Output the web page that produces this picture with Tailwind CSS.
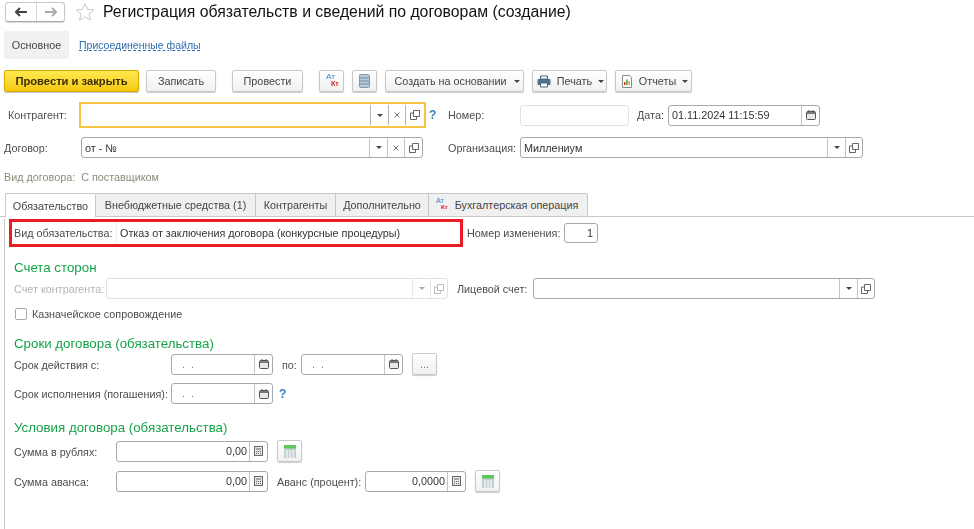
<!DOCTYPE html>
<html lang="ru">
<head>
  <meta charset="UTF-8" />
  <title>Регистрация обязательств</title>
  <script src="https://cdn.jsdelivr.net/npm/@tailwindcss/browser@4"></script>
</head>
<body class="bg-white w-[974px] h-[529px] overflow-hidden whitespace-nowrap font-['Liberation_Sans',Arial,sans-serif] text-[10.8px] text-[#4d4d4d] blur-[0.3px]">

  <!-- header -->
  <div class="flex items-center h-[22px] mt-px pl-[5px]">
    <div class="flex w-[60px] h-[20px] border border-[#c8c8c8] border-b-[#a8a8a8] rounded-[3px] shadow-[0_1px_1px_rgba(0,0,0,0.15)]">
      <div class="w-[31px] flex items-center justify-center border-r border-[#d8d8d8]">
        <svg width="12" height="10" viewBox="0 0 12 10"><path d="M5 1 1 5l4 4M1 5h11" fill="none" stroke="#444" stroke-width="2"/></svg>
      </div>
      <div class="flex-1 flex items-center justify-center">
        <svg width="12" height="10" viewBox="0 0 12 10"><path d="M7 1l4 4-4 4M11 5H0" fill="none" stroke="#aaa" stroke-width="2"/></svg>
      </div>
    </div>
    <svg class="ml-[10px]" width="20" height="20" viewBox="0 0 20 20"><path d="M10 1.500l2.500 5.800 6.300.6-4.800 4.100 1.500 6.200-5.500-3.300-5.500 3.300 1.500-6.200L1.200 7.900l6.300-.6z" fill="#fff" stroke="#c9c9c9"/></svg>
    <h1 class="ml-[8px] text-[15.8px] leading-none text-[#111]">Регистрация обязательств и сведений по договорам (создание)</h1>
  </div>

  <!-- sections -->
  <div class="flex items-center h-[28px] mt-[8px] ml-[4px]">
    <div class="w-[65px] h-full pt-px bg-[#f1f1f1] rounded-[2px] flex items-center justify-center text-[#444]">Основное</div>
    <a class="ml-[10px] pt-px text-[10.5px] text-[#2f6fb5] underline decoration-dashed">Присоединенные файлы</a>
  </div>

  <!-- toolbar -->
  <div class="flex h-[22px] mt-[11px] ml-[4px] text-[#444]">
    <button class="w-[135px] pt-px rounded-[2px] border border-[#d6ab00] bg-gradient-to-b from-[#ffe94d] to-[#f7c800] text-[11.2px] font-bold text-[#3a3000] shadow-[0_1px_1px_rgba(0,0,0,0.25)]">Провести и закрыть</button>
    <button class="w-[70px] pt-px ml-[7px] rounded-[2px] border border-[#c8c8c8] bg-gradient-to-b from-white to-[#f0f0f0] shadow-[0_1px_1px_rgba(0,0,0,0.2)]">Записать</button>
    <button class="w-[71px] pt-px ml-[16px] rounded-[2px] border border-[#c8c8c8] bg-gradient-to-b from-white to-[#f0f0f0] shadow-[0_1px_1px_rgba(0,0,0,0.2)]">Провести</button>
    <button class="w-[25px] ml-[16px] rounded-[2px] border border-[#c8c8c8] bg-gradient-to-b from-white to-[#f0f0f0] shadow-[0_1px_1px_rgba(0,0,0,0.2)] relative">
      <span class="absolute left-[6px] top-[2px] text-[8px] leading-none text-[#3a7fc0]">Ат</span>
      <span class="absolute left-[11px] top-[9px] text-[7px] leading-none font-bold text-[#d9201c]">Кт</span>
    </button>
    <button class="w-[25px] ml-[8px] rounded-[2px] border border-[#c8c8c8] bg-gradient-to-b from-white to-[#f0f0f0] shadow-[0_1px_1px_rgba(0,0,0,0.2)] flex items-center justify-center">
      <svg width="11" height="14" viewBox="0 0 11 14"><rect x=".5" y=".5" width="10" height="13" rx="1" fill="#b9cbd8" stroke="#7d98ab"/><path d="M1 4h9M1 7h9M1 10h9" stroke="#6f8ca1"/></svg>
    </button>
    <button class="w-[139px] pt-px pl-[5px] ml-[8px] rounded-[2px] border border-[#c8c8c8] bg-gradient-to-b from-white to-[#f0f0f0] shadow-[0_1px_1px_rgba(0,0,0,0.2)] flex items-center justify-center gap-[7px]">Создать на основании <span class="w-0 h-0 border-x-[3px] border-x-transparent border-t-[3px] border-t-[#444]"></span></button>
    <button class="w-[75px] pt-px pl-[2px] ml-[8px] rounded-[2px] border border-[#c8c8c8] bg-gradient-to-b from-white to-[#f0f0f0] shadow-[0_1px_1px_rgba(0,0,0,0.2)] flex items-center justify-center gap-[6px]">
      <svg width="14" height="13" viewBox="0 0 14 13"><path d="M3.500 1h7v3h-7z" fill="#fff" stroke="#49637a"/><rect x=".5" y="4" width="13" height="6" rx="1" fill="#4f7191"/><path d="M3.500 8h7v4h-7z" fill="#fff" stroke="#49637a"/></svg>
      Печать <span class="w-0 h-0 border-x-[3px] border-x-transparent border-t-[3px] border-t-[#444]"></span></button>
    <button class="w-[77px] pt-px pl-[2px] ml-[8px] rounded-[2px] border border-[#c8c8c8] bg-gradient-to-b from-white to-[#f0f0f0] shadow-[0_1px_1px_rgba(0,0,0,0.2)] flex items-center justify-center gap-[6px]">
      <svg width="12" height="13" viewBox="0 0 12 13"><path d="M1.500.5h7l2 2v10h-9z" fill="#fff" stroke="#8a8a8a"/><path d="M3 10V7h1.500v3z" fill="#d9352b"/><path d="M5.200 10V4.500h1.500V10z" fill="#3f9b3f"/><path d="M7.500 10V6H9v4z" fill="#e0a020"/></svg>
      Отчеты <span class="w-0 h-0 border-x-[3px] border-x-transparent border-t-[3px] border-t-[#444]"></span></button>
  </div>

  <!-- Контрагент / Номер / Дата -->
  <div class="flex items-center h-[26px] mt-[10px]">
    <span class="w-[79px] pl-[8px] pt-px">Контрагент:</span>
    <div class="w-[347px] h-[26px] border-2 border-[#f5c542] flex items-center justify-end pr-[1px]">
      <span class="w-[18px] h-[20px] border-l border-[#b5b5b5] flex items-center justify-center"><span class="w-0 h-0 border-x-[3px] border-x-transparent border-t-[3px] border-t-[#444]"></span></span>
      <span class="w-[17px] h-[20px] border-l border-[#b5b5b5] flex items-center justify-center"><svg width="6" height="6" viewBox="0 0 6 6"><path d="M.5.5l5 5M5.500.5l-5 5" stroke="#777"/></svg></span>
      <span class="w-[18px] h-[20px] border-l border-[#b5b5b5] flex items-center justify-center"><svg width="10" height="10" viewBox="0 0 10 10"><path d="M3.500.5h6v6h-6zM3.500 3H.5v6.500h6V6.500" fill="none" stroke="#666"/></svg></span>
    </div>
    <span class="w-[22px] pl-[3px] text-[12px] font-bold text-[#2f7fc1]">?</span>
    <span class="w-[72px] pt-px">Номер:</span>
    <div class="w-[109px] h-[21px] border border-[#e2e2e2] rounded-[3px]"></div>
    <span class="ml-[8px] w-[31px] pt-px">Дата:</span>
    <div class="w-[152px] h-[21px] border border-[#a8a8a8] rounded-[3px] flex items-center text-[#333]">
      <span class="flex-1 pl-[3px] pt-px">01.11.2024 11:15:59</span>
      <span class="w-[18px] h-full border-l border-[#c4c4c4] flex items-center justify-center"><svg width="10" height="10" viewBox="0 0 10 10"><rect x=".5" y="1.500" width="9" height="8" rx="1" fill="#e8e8e8" stroke="#555"/><path d="M1 3h8" stroke="#555" stroke-width="1.500"/><path d="M3 0v2M7 0v2" stroke="#555"/></svg></span>
    </div>
  </div>

  <!-- Договор / Организация -->
  <div class="flex items-center h-[21px] mt-[9px]">
    <span class="w-[81px] pl-[4px] pt-px">Договор:</span>
    <div class="w-[342px] h-[21px] border border-[#a8a8a8] rounded-[3px] flex items-center text-[#333]">
      <span class="flex-1 pl-[3px] pt-px">от - №</span>
      <span class="w-[18px] h-full border-l border-[#c4c4c4] flex items-center justify-center"><span class="w-0 h-0 border-x-[3px] border-x-transparent border-t-[3px] border-t-[#444]"></span></span>
      <span class="w-[17px] h-full border-l border-[#c4c4c4] flex items-center justify-center"><svg width="6" height="6" viewBox="0 0 6 6"><path d="M.5.5l5 5M5.500.5l-5 5" stroke="#777"/></svg></span>
      <span class="w-[18px] h-full border-l border-[#c4c4c4] flex items-center justify-center"><svg width="10" height="10" viewBox="0 0 10 10"><path d="M3.500.5h6v6h-6zM3.500 3H.5v6.500h6V6.500" fill="none" stroke="#666"/></svg></span>
    </div>
    <span class="ml-[25px] w-[72px] pt-px">Организация:</span>
    <div class="w-[343px] h-[21px] border border-[#a8a8a8] rounded-[3px] flex items-center text-[#333]">
      <span class="flex-1 pl-[3px] pt-px">Миллениум</span>
      <span class="w-[18px] h-full border-l border-[#c4c4c4] flex items-center justify-center"><span class="w-0 h-0 border-x-[3px] border-x-transparent border-t-[3px] border-t-[#444]"></span></span>
      <span class="w-[17px] h-full border-l border-[#c4c4c4] flex items-center justify-center"><svg width="10" height="10" viewBox="0 0 10 10"><path d="M3.500.5h6v6h-6zM3.500 3H.5v6.500h6V6.500" fill="none" stroke="#666"/></svg></span>
    </div>
  </div>

  <div class="h-[14px] mt-[12px] pl-[4px] leading-[14px] text-[#8c8c7a]">Вид договора: <span class="ml-[3px]">С поставщиком</span></div>

  <!-- tabs -->
  <div class="flex h-[24px] mt-[9px] pl-[5px] border-b border-[#c8c8c8] text-[#444]">
    <div class="w-[91px] h-[24px] pt-px bg-white border border-b-0 border-[#c8c8c8] rounded-t-[2px] flex items-center justify-center">Обязательство</div>
    <div class="w-[160px] pt-px bg-[#f0f0f0] border-t border-r border-[#c8c8c8] flex items-center justify-center">Внебюджетные средства (1)</div>
    <div class="w-[80px] pt-px bg-[#f0f0f0] border-t border-r border-[#c8c8c8] flex items-center justify-center">Контрагенты</div>
    <div class="w-[93px] pt-px bg-[#f0f0f0] border-t border-r border-[#c8c8c8] flex items-center justify-center">Дополнительно</div>
    <div class="w-[159px] pt-px bg-[#f0f0f0] border-t border-r border-[#c8c8c8] rounded-tr-[3px] flex items-center justify-center gap-[4px] relative pl-[17px]">
      <span class="absolute left-[7px] top-[3px] text-[7px] leading-none text-[#3a7fc0]">Ат</span>
      <span class="absolute left-[12px] top-[10px] text-[6px] leading-none font-bold text-[#d9201c]">Кт</span>
      Бухгалтерская операция
    </div>
  </div>

  <!-- tab page -->
  <div class="ml-[4px] h-[311px] border-l border-[#c8c8c8] pl-[9px]">

    <div class="flex items-center mt-[2px] -ml-[5px] h-[28px]">
      <div class="w-[454px] h-[28px] border-[3px] border-[#ed1c24] flex items-center">
        <span class="pl-[2px] w-[105px] h-full pt-px flex items-center shrink-0 border-r border-[#eeeeee]">Вид обязательства:</span>
        <span class="pl-[3px] pt-px text-[#333]">Отказ от заключения договора (конкурсные процедуры)</span>
      </div>
      <span class="ml-[4px] w-[97px] pt-px">Номер изменения:</span>
      <div class="w-[34px] h-[20px] border border-[#a8a8a8] rounded-[3px] flex items-center justify-end pr-[4px] pt-px text-[#333]">1</div>
    </div>

    <h2 class="mt-[12px] h-[17px] leading-[17px] text-[13.3px] text-[#16a34a] font-normal">Счета сторон</h2>

    <div class="flex items-center h-[21px] mt-[2px] text-[#b5b5b5]">
      <span class="w-[92px] pt-px">Счет контрагента:</span>
      <div class="w-[342px] h-[21px] border border-[#e2e2e2] rounded-[3px] flex justify-end">
        <span class="w-[18px] h-full border-l border-[#e8e8e8] flex items-center justify-center"><span class="w-0 h-0 border-x-[3px] border-x-transparent border-t-[3px] border-t-[#aaa]"></span></span>
        <span class="w-[17px] h-full border-l border-[#e8e8e8] flex items-center justify-center"><svg width="10" height="10" viewBox="0 0 10 10"><path d="M3.500.5h6v6h-6zM3.500 3H.5v6.500h6V6.500" fill="none" stroke="#bbb"/></svg></span>
      </div>
      <span class="ml-[9px] w-[76px] pt-px text-[#4d4d4d]">Лицевой счет:</span>
      <div class="w-[342px] h-[21px] border border-[#a8a8a8] rounded-[3px] flex justify-end">
        <span class="w-[18px] h-full border-l border-[#c4c4c4] flex items-center justify-center"><span class="w-0 h-0 border-x-[3px] border-x-transparent border-t-[3px] border-t-[#444]"></span></span>
        <span class="w-[17px] h-full border-l border-[#c4c4c4] flex items-center justify-center"><svg width="10" height="10" viewBox="0 0 10 10"><path d="M3.500.5h6v6h-6zM3.500 3H.5v6.500h6V6.500" fill="none" stroke="#666"/></svg></span>
      </div>
    </div>

    <div class="flex items-center h-[14px] mt-[8px]">
      <span class="w-[12px] h-[12px] ml-px border border-[#a8a8a8] rounded-[2px]"></span>
      <span class="ml-[5px]">Казначейское сопровождение</span>
    </div>

    <h2 class="mt-[14px] h-[17px] leading-[17px] text-[13.3px] text-[#16a34a] font-normal">Сроки договора (обязательства)</h2>

    <div class="flex items-center h-[22px] mt-px">
      <span class="w-[157px] pt-[2px]">Срок действия с:</span>
      <div class="w-[102px] h-[21px] border border-[#a8a8a8] rounded-[3px] flex items-center text-[#777]">
        <span class="flex-1 pl-[10px]">. &nbsp;.</span>
        <span class="w-[18px] h-full border-l border-[#c4c4c4] flex items-center justify-center"><svg width="10" height="10" viewBox="0 0 10 10"><rect x=".5" y="1.500" width="9" height="8" rx="1" fill="#e8e8e8" stroke="#555"/><path d="M1 3h8" stroke="#555" stroke-width="1.500"/><path d="M3 0v2M7 0v2" stroke="#555"/></svg></span>
      </div>
      <span class="ml-[9px] w-[19px] pt-[2px]">по:</span>
      <div class="w-[102px] h-[21px] border border-[#a8a8a8] rounded-[3px] flex items-center text-[#777]">
        <span class="flex-1 pl-[10px]">. &nbsp;.</span>
        <span class="w-[18px] h-full border-l border-[#c4c4c4] flex items-center justify-center"><svg width="10" height="10" viewBox="0 0 10 10"><rect x=".5" y="1.500" width="9" height="8" rx="1" fill="#e8e8e8" stroke="#555"/><path d="M1 3h8" stroke="#555" stroke-width="1.500"/><path d="M3 0v2M7 0v2" stroke="#555"/></svg></span>
      </div>
      <button class="ml-[9px] w-[25px] h-[22px] rounded-[2px] border border-[#c8c8c8] bg-gradient-to-b from-white to-[#f0f0f0] shadow-[0_1px_1px_rgba(0,0,0,0.2)] text-[#777]">...</button>
    </div>

    <div class="flex items-center h-[21px] mt-[8px]">
      <span class="w-[157px] pt-[2px]">Срок исполнения (погашения):</span>
      <div class="w-[102px] h-[21px] border border-[#a8a8a8] rounded-[3px] flex items-center text-[#777]">
        <span class="flex-1 pl-[10px]">. &nbsp;.</span>
        <span class="w-[18px] h-full border-l border-[#c4c4c4] flex items-center justify-center"><svg width="10" height="10" viewBox="0 0 10 10"><rect x=".5" y="1.500" width="9" height="8" rx="1" fill="#e8e8e8" stroke="#555"/><path d="M1 3h8" stroke="#555" stroke-width="1.500"/><path d="M3 0v2M7 0v2" stroke="#555"/></svg></span>
      </div>
      <span class="ml-[6px] text-[12px] font-bold text-[#2f7fc1]">?</span>
    </div>

    <h2 class="mt-[15px] h-[17px] leading-[17px] text-[13.3px] text-[#16a34a] font-normal">Условия договора (обязательства)</h2>

    <div class="flex items-center h-[22px] mt-[4px]">
      <span class="w-[102px] pt-[2px]">Сумма в рублях:</span>
      <div class="w-[152px] h-[21px] border border-[#a8a8a8] rounded-[3px] flex items-center text-[#333]">
        <span class="flex-1 text-right pr-[2px] pt-px">0,00</span>
        <span class="w-[18px] h-full border-l border-[#c4c4c4] flex items-center justify-center"><svg width="9" height="10" viewBox="0 0 9 10"><rect x=".5" y=".5" width="8" height="9" fill="#e8e8e8" stroke="#666"/><path d="M2 3h5M2 5.500h1M4 5.500h1M6 5.500h1M2 7.500h1M4 7.500h1M6 7.500h1" stroke="#666"/></svg></span>
      </div>
      <button class="ml-[9px] w-[25px] h-[22px] rounded-[2px] border border-[#c8c8c8] bg-gradient-to-b from-white to-[#f0f0f0] shadow-[0_1px_1px_rgba(0,0,0,0.2)] flex items-center justify-center">
        <svg width="12" height="13" viewBox="0 0 12 13"><rect width="12" height="13" fill="#c4d0d6"/><rect width="12" height="3.500" fill="#5cc85c"/><path d="M3 5v8M6 5v8M9 5v8" stroke="#fff"/></svg>
      </button>
    </div>

    <div class="flex items-center h-[22px] mt-[8px]">
      <span class="w-[102px] pt-[2px]">Сумма аванса:</span>
      <div class="w-[152px] h-[21px] border border-[#a8a8a8] rounded-[3px] flex items-center text-[#333]">
        <span class="flex-1 text-right pr-[2px] pt-px">0,00</span>
        <span class="w-[18px] h-full border-l border-[#c4c4c4] flex items-center justify-center"><svg width="9" height="10" viewBox="0 0 9 10"><rect x=".5" y=".5" width="8" height="9" fill="#e8e8e8" stroke="#666"/><path d="M2 3h5M2 5.500h1M4 5.500h1M6 5.500h1M2 7.500h1M4 7.500h1M6 7.500h1" stroke="#666"/></svg></span>
      </div>
      <span class="ml-[9px] w-[88px] pt-[2px]">Аванс (процент):</span>
      <div class="w-[101px] h-[21px] border border-[#a8a8a8] rounded-[3px] flex items-center text-[#333]">
        <span class="flex-1 text-right pr-[2px] pt-px">0,0000</span>
        <span class="w-[18px] h-full border-l border-[#c4c4c4] flex items-center justify-center"><svg width="9" height="10" viewBox="0 0 9 10"><rect x=".5" y=".5" width="8" height="9" fill="#e8e8e8" stroke="#666"/><path d="M2 3h5M2 5.500h1M4 5.500h1M6 5.500h1M2 7.500h1M4 7.500h1M6 7.500h1" stroke="#666"/></svg></span>
      </div>
      <button class="ml-[9px] w-[25px] h-[22px] rounded-[2px] border border-[#c8c8c8] bg-gradient-to-b from-white to-[#f0f0f0] shadow-[0_1px_1px_rgba(0,0,0,0.2)] flex items-center justify-center">
        <svg width="12" height="13" viewBox="0 0 12 13"><rect width="12" height="13" fill="#c4d0d6"/><rect width="12" height="3.500" fill="#5cc85c"/><path d="M3 5v8M6 5v8M9 5v8" stroke="#fff"/></svg>
      </button>
    </div>
  </div>

</body>
</html>
